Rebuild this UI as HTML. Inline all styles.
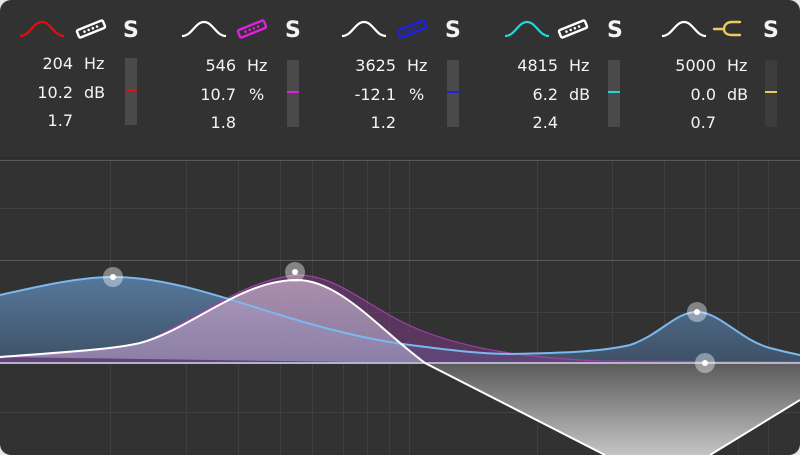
<!DOCTYPE html>
<html><head><meta charset="utf-8"><style>
html,body{margin:0;padding:0;background:#e6e6e6;width:800px;height:455px;overflow:hidden}
svg{display:block}
text{font-family:"DejaVu Sans","Liberation Sans",sans-serif;fill:#f4f4f4;font-size:16px}
</style></head><body>
<svg width="800" height="455" viewBox="0 0 800 455" xmlns="http://www.w3.org/2000/svg">
<defs>
<clipPath id="c"><rect x="0" y="0" width="800" height="455" rx="11"/></clipPath>
<linearGradient id="bl" x1="0" y1="0" x2="0" y2="1"><stop offset="0" stop-color="#5a7fa6" stop-opacity="0.9"/><stop offset="1" stop-color="#3f546b" stop-opacity="0.9"/></linearGradient>
<linearGradient id="gr" x1="0" y1="363" x2="0" y2="455" gradientUnits="userSpaceOnUse"><stop offset="0" stop-color="#5a5a5a"/><stop offset="1" stop-color="#c4c4c4"/></linearGradient>
<linearGradient id="pk" x1="0" y1="275" x2="0" y2="363" gradientUnits="userSpaceOnUse"><stop offset="0" stop-color="#c9aecb" stop-opacity="0.75"/><stop offset="1" stop-color="#a9a6c6" stop-opacity="0.6"/></linearGradient>
</defs>
<g clip-path="url(#c)">
<rect width="800" height="455" fill="#323232"/>
<g stroke="#404040" stroke-width="1">
<line x1="0" y1="208.5" x2="800" y2="208.5"/><line x1="0" y1="312.5" x2="800" y2="312.5"/><line x1="0" y1="412.5" x2="800" y2="412.5"/>
<line x1="110.5" y1="160" x2="110.5" y2="455"/><line x1="186.5" y1="160" x2="186.5" y2="455"/><line x1="238.5" y1="160" x2="238.5" y2="455"/><line x1="280.5" y1="160" x2="280.5" y2="455"/><line x1="312.5" y1="160" x2="312.5" y2="455"/><line x1="343.5" y1="160" x2="343.5" y2="455"/><line x1="367.5" y1="160" x2="367.5" y2="455"/><line x1="389.5" y1="160" x2="389.5" y2="455"/><line x1="409.5" y1="160" x2="409.5" y2="455"/><line x1="537.5" y1="160" x2="537.5" y2="455"/><line x1="612.5" y1="160" x2="612.5" y2="455"/><line x1="664.5" y1="160" x2="664.5" y2="455"/><line x1="705.5" y1="160" x2="705.5" y2="455"/><line x1="738.5" y1="160" x2="738.5" y2="455"/><line x1="768.5" y1="160" x2="768.5" y2="455"/>
</g>
<line x1="0" y1="158" x2="800" y2="158" stroke="#2a2a2a" stroke-width="1"/>
<line x1="0" y1="160.5" x2="800" y2="160.5" stroke="#595959" stroke-width="1"/>
<line x1="0" y1="260.5" x2="800" y2="260.5" stroke="#5a5a5a" stroke-width="1"/>
<path d="M0,295 C40,286 80,277 113,277 C170,277 230,300 290,318 C330,330 370,340 410,345 C450,350 480,354 510,354 C560,353 600,352 630,345 C660,335 675,312 697,312 C720,312 740,340 770,348 C785,352 795,354 800,355 L800,363 L0,363 Z" fill="url(#bl)"/>
<path d="M0,358 C60,354 120,350 140,343 C190,325 240,280 297,275 C340,275 370,310 420,330 C470,350 530,358 600,361 L800,362 L800,363 L0,363 Z" fill="#7a3a82" fill-opacity="0.55"/>
<path d="M0,358 C60,354 120,350 140,343 C190,325 240,280 297,275 C340,275 370,310 420,330 C470,350 530,358 600,361 L800,362" fill="none" stroke="#a040a8" stroke-width="1.2"/>
<path d="M0,357 C50,353 110,350 140,343 C190,330 240,280 297,280 C340,280 380,330 425,363 Z" fill="url(#pk)"/>
<path d="M425,363 L605,455 L710,455 L800,400 L800,363 Z" fill="url(#gr)"/>
<path d="M0,295 C40,286 80,277 113,277 C170,277 230,300 290,318 C330,330 370,340 410,345 C450,350 480,354 510,354 C560,353 600,352 630,345 C660,335 675,312 697,312 C720,312 740,340 770,348 C785,352 795,354 800,355" fill="none" stroke="#7ab8ee" stroke-width="2"/>
<line x1="0" y1="363" x2="800" y2="363" stroke="#b8b0cc" stroke-width="2"/>
<path d="M0,357 C50,353 110,350 140,343 C190,330 240,280 297,280 C340,280 380,330 425,363 L605,455 M710,455 L800,400" fill="none" stroke="#fff" stroke-width="2"/>
<g fill="#fff" fill-opacity="0.4"><circle cx="113" cy="277" r="10"/><circle cx="295" cy="272" r="10"/><circle cx="697" cy="312" r="10"/><circle cx="705" cy="363" r="10"/></g>
<g fill="#fff"><circle cx="113" cy="277" r="3"/><circle cx="295" cy="272" r="3"/><circle cx="697" cy="312" r="3"/><circle cx="705" cy="363" r="3"/></g>

<g>
<path d="M20,36 C30,36 33,22 42,22 C51,22 54,36 64,36" fill="none" stroke="#e01010" stroke-width="2.2"/>
<g transform="translate(91,29) rotate(-22)"><rect x="-14" y="-4" width="28" height="8" rx="1.5" fill="none" stroke="#fff" stroke-width="2.4"/><g fill="#fff"><circle cx="-7" cy="0" r="1.3"/><circle cx="-2.5" cy="0" r="1.3"/><circle cx="2" cy="0" r="1.3"/><circle cx="6.5" cy="0" r="1.3"/></g></g>
<text x="123" y="37" style="font-size:22px;font-weight:bold">S</text>
<text x="73" y="69" text-anchor="end">204</text><text x="84" y="69">Hz</text>
<text x="73" y="98" text-anchor="end">10.2</text><text x="84" y="98">dB</text>
<text x="73" y="126" text-anchor="end">1.7</text>
<rect x="125" y="58" width="12" height="67" fill="#4a4a4a"/><rect x="125" y="89" width="12" height="2" fill="#e01010"/>
</g>
<g>
<path d="M182,36 C192,36 195,22 204,22 C213,22 216,36 226,36" fill="none" stroke="#fff" stroke-width="2.2"/>
<g transform="translate(252,29) rotate(-22)"><rect x="-14" y="-4" width="28" height="8" rx="1.5" fill="none" stroke="#e020e0" stroke-width="2.4"/><g fill="#e020e0"><circle cx="-7" cy="0" r="1.3"/><circle cx="-2.5" cy="0" r="1.3"/><circle cx="2" cy="0" r="1.3"/><circle cx="6.5" cy="0" r="1.3"/></g></g>
<text x="285" y="37" style="font-size:22px;font-weight:bold">S</text>
<text x="236" y="71" text-anchor="end">546</text><text x="247" y="71">Hz</text>
<text x="236" y="100" text-anchor="end">10.7</text><text x="249" y="100">%</text>
<text x="236" y="128" text-anchor="end">1.8</text>
<rect x="287" y="60" width="12" height="67" fill="#4a4a4a"/><rect x="287" y="91" width="12" height="2" fill="#e020e0"/>
</g>
<g>
<path d="M342,36 C352,36 355,22 364,22 C373,22 376,36 386,36" fill="none" stroke="#fff" stroke-width="2.2"/>
<g transform="translate(412,29) rotate(-22)"><rect x="-14" y="-4" width="28" height="8" rx="1.5" fill="none" stroke="#2020e0" stroke-width="2.4"/><g fill="#2020e0"><circle cx="-7" cy="0" r="1.3"/><circle cx="-2.5" cy="0" r="1.3"/><circle cx="2" cy="0" r="1.3"/><circle cx="6.5" cy="0" r="1.3"/></g></g>
<text x="445" y="37" style="font-size:22px;font-weight:bold">S</text>
<text x="396" y="71" text-anchor="end">3625</text><text x="407" y="71">Hz</text>
<text x="396" y="100" text-anchor="end">-12.1</text><text x="409" y="100">%</text>
<text x="396" y="128" text-anchor="end">1.2</text>
<rect x="447" y="60" width="12" height="67" fill="#4a4a4a"/><rect x="447" y="91" width="12" height="2" fill="#2020e0"/>
</g>
<g>
<path d="M505,36 C515,36 518,22 527,22 C536,22 539,36 549,36" fill="none" stroke="#20d8d8" stroke-width="2.2"/>
<g transform="translate(573,29) rotate(-22)"><rect x="-14" y="-4" width="28" height="8" rx="1.5" fill="none" stroke="#fff" stroke-width="2.4"/><g fill="#fff"><circle cx="-7" cy="0" r="1.3"/><circle cx="-2.5" cy="0" r="1.3"/><circle cx="2" cy="0" r="1.3"/><circle cx="6.5" cy="0" r="1.3"/></g></g>
<text x="607" y="37" style="font-size:22px;font-weight:bold">S</text>
<text x="558" y="71" text-anchor="end">4815</text><text x="569" y="71">Hz</text>
<text x="558" y="100" text-anchor="end">6.2</text><text x="569" y="100">dB</text>
<text x="558" y="128" text-anchor="end">2.4</text>
<rect x="608" y="60" width="12" height="67" fill="#4a4a4a"/><rect x="608" y="91" width="12" height="2" fill="#20d8d8"/>
</g>
<g>
<path d="M662,36 C672,36 675,22 684,22 C693,22 696,36 706,36" fill="none" stroke="#fff" stroke-width="2.2"/>
<path d="M714,29 L724,29 M740,22 L732,22 C726,22 724,26 724,29 C724,32 726,35 732,35 L740,35" fill="none" stroke="#f0c860" stroke-width="2.4" stroke-linecap="round"/>
<text x="763" y="37" style="font-size:22px;font-weight:bold">S</text>
<text x="716" y="71" text-anchor="end">5000</text><text x="727" y="71">Hz</text>
<text x="716" y="100" text-anchor="end">0.0</text><text x="727" y="100">dB</text>
<text x="716" y="128" text-anchor="end">0.7</text>
<rect x="765" y="60" width="12" height="67" fill="#3c3c3c"/><rect x="765" y="91" width="12" height="2" fill="#f0c860"/>
</g>
</g>
</svg>
</body></html>
